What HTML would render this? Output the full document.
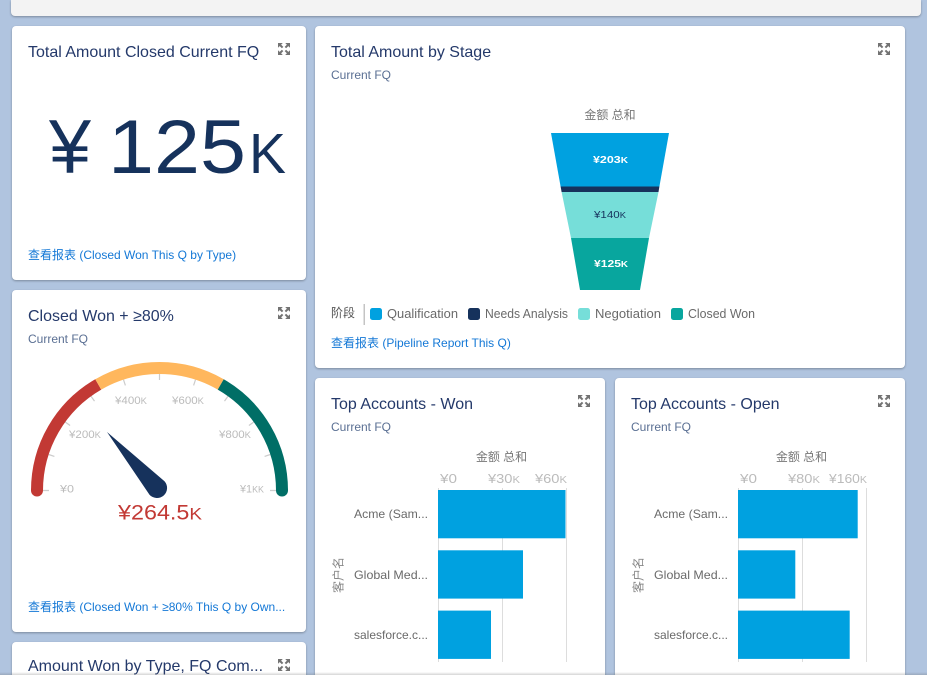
<!DOCTYPE html>
<html lang="zh"><head><meta charset="utf-8"><title>Dashboard</title>
<style>
html,body{margin:0;padding:0;width:927px;height:675px;overflow:hidden;background:#b0c4df;font-family:"Liberation Sans","Noto Sans CJK SC",sans-serif}
#page{position:relative;width:927px;height:675px;overflow:hidden;background:#b0c4df}
.card{position:absolute;background:#fff;border-radius:4px;box-shadow:0 1px 2px rgba(0,0,0,.3);overflow:hidden}
.cut{border-radius:4px 4px 0 0}
.card>svg.c{position:absolute;left:0;top:0}
.t{position:absolute;left:16px;font-size:16px;line-height:20px;color:#24396a;white-space:nowrap}
.s{position:absolute;left:16px;font-size:12px;line-height:16px;color:#5a6f93;white-space:nowrap}
.l{position:absolute;left:16px;font-size:12px;line-height:16px;color:#1478d6;white-space:nowrap}
.i{position:absolute;width:12px;height:12px}
text{font-family:"Liberation Sans","Noto Sans CJK SC",sans-serif}
#shade{position:absolute;left:0;top:672px;width:927px;height:3px;background:linear-gradient(rgba(90,90,90,0),rgba(90,90,90,.25))}
</style></head><body>
<div id="page">
<svg width="0" height="0" style="position:absolute"><symbol id="x" viewBox="0 0 12 12"><g fill="#737373" stroke="none"><path d="M0 0H4.8L0 4.8Z"/><path d="M12 0H7.2L12 4.8Z"/><path d="M0 12H4.8L0 7.2Z"/><path d="M12 12H7.2L12 7.2Z"/></g><path d="M1.5 1.5L4.6 4.6M10.5 1.5L7.4 4.6M1.5 10.5L4.6 7.4M10.5 10.5L7.4 7.4" stroke="#737373" stroke-width="2" fill="none"/></symbol></svg>

<div class="card" style="left:11px;top:0;width:910px;height:16px;background:#f3f3f3;border-radius:0 0 4px 4px"></div>

<div class="card" style="left:12px;top:26px;width:294px;height:254px">
<div class="t" style="top:17px">Total Amount Closed Current FQ</div>
<svg class="i" style="left:266px;top:17px"><use href="#x" width="12" height="12"/></svg>
<svg class="c" width="294" height="254" viewBox="12 26 294 254" fill="#16325c">
<text x="49" y="173" font-size="76" textLength="42" lengthAdjust="spacingAndGlyphs">¥</text>
<text x="108" y="173" font-size="76" textLength="138" lengthAdjust="spacingAndGlyphs">125</text>
<text x="249" y="173" font-size="57" textLength="37" lengthAdjust="spacingAndGlyphs">K</text>
</svg>
<div class="l" style="top:221px">查看报表 (Closed Won This Q by Type)</div>
</div>

<div class="card" style="left:12px;top:290px;width:294px;height:342px">
<div class="t" style="top:17px">Closed Won + ≥80%</div>
<div class="s" style="top:41px">Current FQ</div>
<svg class="i" style="left:266px;top:17px"><use href="#x" width="12" height="12"/></svg>
<svg class="c" width="294" height="342" viewBox="12 290 294 342">
<g stroke="#ccc" stroke-width="1.2" fill="none">
<path d="M43 490.5H49M48.7 454.5L54.4 456.4M65.2 422L70.1 425.5M91 396.2L94.5 401.1M123.5 379.7L125.4 385.4M159.5 374V380M195.5 379.7L193.6 385.4M228 396.2L224.5 401.1M253.8 422L248.9 425.5M270.3 454.5L264.6 456.4M276 490.5H270"/>
</g>
<g fill="none" stroke-width="12">
<path d="M37 490.5A122.5 122.5 0 0 1 98.25 384.41" stroke="#c23934"/>
<path d="M98.25 384.41A122.5 122.5 0 0 1 220.75 384.41" stroke="#ffb75d"/>
<path d="M220.75 384.41A122.5 122.5 0 0 1 282 490.5" stroke="#006e66"/>
</g>
<circle cx="37" cy="490.5" r="6" fill="#c23934"/><circle cx="282" cy="490.5" r="6" fill="#006e66"/>
<g font-size="11" fill="#bbb">
<text x="60" y="492.5" textLength="14" lengthAdjust="spacingAndGlyphs">¥0</text>
<text x="69" y="438" textLength="32" lengthAdjust="spacingAndGlyphs">¥200<tspan font-size="9">K</tspan></text>
<text x="115" y="404" textLength="32" lengthAdjust="spacingAndGlyphs">¥400<tspan font-size="9">K</tspan></text>
<text x="172" y="404" textLength="32" lengthAdjust="spacingAndGlyphs">¥600<tspan font-size="9">K</tspan></text>
<text x="219" y="438" textLength="32" lengthAdjust="spacingAndGlyphs">¥800<tspan font-size="9">K</tspan></text>
<text x="240" y="492.5" textLength="24" lengthAdjust="spacingAndGlyphs">¥1<tspan font-size="9">KK</tspan></text>
</g>
<path d="M107 432L164.5 481.3A10 10 0 1 1 149.5 494.7Z" fill="#16325c"/>
<text x="118" y="519.5" font-size="21" fill="#c23934" textLength="84" lengthAdjust="spacingAndGlyphs">¥264.5<tspan font-size="17">K</tspan></text>
</svg>
<div class="l" style="top:309px">查看报表 (Closed Won + ≥80% This Q by Own...</div>
</div>

<div class="card cut" style="left:12px;top:642px;width:294px;height:33px">
<div class="t" style="top:15px;height:18px;line-height:20px;overflow:hidden;width:240px">Amount Won by Type, FQ Com...</div>
<svg class="i" style="left:266px;top:17px"><use href="#x" width="12" height="12"/></svg>
</div>

<div class="card" style="left:315px;top:26px;width:590px;height:342px">
<div class="t" style="top:17px">Total Amount by Stage</div>
<div class="s" style="top:41px">Current FQ</div>
<svg class="i" style="left:563px;top:17px"><use href="#x" width="12" height="12"/></svg>
<svg class="c" width="590" height="342" viewBox="315 26 590 342">
<text x="610" y="119" font-size="12" fill="#777" text-anchor="middle">金额 总和</text>
<path d="M551 133H669L659.4 186.5H560.6Z" fill="#00a1e0"/>
<path d="M560.6 186.5H659.4L658.5 192H561.6Z" fill="#16325c"/>
<path d="M561.6 192H658.5L649 238H571Z" fill="#76ded9"/>
<path d="M571 238H649L640 290H580Z" fill="#08a69e"/>
<g font-size="10.5" font-weight="bold">
<text x="593" y="163" fill="#fff" textLength="35" lengthAdjust="spacingAndGlyphs">¥203<tspan font-size="8.5">K</tspan></text>
<text x="594" y="218" fill="#16325c" font-weight="normal" textLength="32" lengthAdjust="spacingAndGlyphs">¥140<tspan font-size="8.5">K</tspan></text>
<text x="594" y="267" fill="#fff" textLength="34" lengthAdjust="spacingAndGlyphs">¥125<tspan font-size="8.5">K</tspan></text>
</g>
<text x="331" y="317" font-size="12" fill="#555">阶段</text>
<rect x="363.5" y="304" width="1.5" height="21" fill="#c4c4c4"/>
<rect x="370" y="308" width="12" height="12" rx="2.5" fill="#00a1e0"/>
<rect x="468" y="308" width="12" height="12" rx="2.5" fill="#16325c"/>
<rect x="578" y="308" width="12" height="12" rx="2.5" fill="#76ded9"/>
<rect x="671" y="308" width="12" height="12" rx="2.5" fill="#08a69e"/>
<g font-size="13" fill="#6a6a6a">
<text x="387" y="318" textLength="71" lengthAdjust="spacingAndGlyphs">Qualification</text>
<text x="485" y="318" textLength="83" lengthAdjust="spacingAndGlyphs">Needs Analysis</text>
<text x="595" y="318" textLength="66" lengthAdjust="spacingAndGlyphs">Negotiation</text>
<text x="688" y="318" textLength="67" lengthAdjust="spacingAndGlyphs">Closed Won</text>
</g>
</svg>
<div class="l" style="top:309px">查看报表 (Pipeline Report This Q)</div>
</div>

<div class="card cut" style="left:315px;top:378px;width:290px;height:297px">
<div class="t" style="top:17px">Top Accounts - Won</div>
<div class="s" style="top:41px">Current FQ</div>
<svg class="i" style="left:263px;top:17px"><use href="#x" width="12" height="12"/></svg>
<svg class="c" width="290" height="297" viewBox="315 378 290 297">
<text x="501.5" y="461" font-size="12" fill="#777" text-anchor="middle">金额 总和</text>
<g font-size="13" fill="#bbb">
<text x="440" y="483" textLength="17" lengthAdjust="spacingAndGlyphs">¥0</text>
<text x="488" y="483" textLength="32" lengthAdjust="spacingAndGlyphs">¥30<tspan font-size="10">K</tspan></text>
<text x="535" y="483" textLength="32" lengthAdjust="spacingAndGlyphs">¥60<tspan font-size="10">K</tspan></text>
</g>
<path d="M438.5 488V662M502.5 488V662M566.5 488V662" stroke="#ddd" fill="none"/>
<g fill="#00a1e0">
<rect x="438" y="490" width="127.5" height="48.3"/>
<rect x="438" y="550.3" width="85" height="48.3"/>
<rect x="438" y="610.6" width="53" height="48.3"/>
</g>
<g font-size="12" fill="#6a6a6a">
<text x="354" y="518" textLength="74" lengthAdjust="spacingAndGlyphs">Acme (Sam...</text>
<text x="354" y="579" textLength="74" lengthAdjust="spacingAndGlyphs">Global Med...</text>
<text x="354" y="639" textLength="74" lengthAdjust="spacingAndGlyphs">salesforce.c...</text>
</g>
<text x="0" y="0" font-size="12" fill="#888" text-anchor="middle" transform="translate(342.5,575) rotate(-90)">客户名</text>
</svg>
</div>

<div class="card cut" style="left:615px;top:378px;width:290px;height:297px">
<div class="t" style="top:17px">Top Accounts - Open</div>
<div class="s" style="top:41px">Current FQ</div>
<svg class="i" style="left:263px;top:17px"><use href="#x" width="12" height="12"/></svg>
<svg class="c" width="290" height="297" viewBox="615 378 290 297">
<text x="801.5" y="461" font-size="12" fill="#777" text-anchor="middle">金额 总和</text>
<g font-size="13" fill="#bbb">
<text x="740" y="483" textLength="17" lengthAdjust="spacingAndGlyphs">¥0</text>
<text x="788" y="483" textLength="32" lengthAdjust="spacingAndGlyphs">¥80<tspan font-size="10">K</tspan></text>
<text x="829" y="483" textLength="38" lengthAdjust="spacingAndGlyphs">¥160<tspan font-size="10">K</tspan></text>
</g>
<path d="M738.5 488V662M802.5 488V662M866.5 488V662" stroke="#ddd" fill="none"/>
<g fill="#00a1e0">
<rect x="738" y="490" width="119.7" height="48.3"/>
<rect x="738" y="550.3" width="57.3" height="48.3"/>
<rect x="738" y="610.6" width="111.7" height="48.3"/>
</g>
<g font-size="12" fill="#6a6a6a">
<text x="654" y="518" textLength="74" lengthAdjust="spacingAndGlyphs">Acme (Sam...</text>
<text x="654" y="579" textLength="74" lengthAdjust="spacingAndGlyphs">Global Med...</text>
<text x="654" y="639" textLength="74" lengthAdjust="spacingAndGlyphs">salesforce.c...</text>
</g>
<text x="0" y="0" font-size="12" fill="#888" text-anchor="middle" transform="translate(642.5,575) rotate(-90)">客户名</text>
</svg>
</div>
<div id="shade"></div>
</div>
</body></html>
